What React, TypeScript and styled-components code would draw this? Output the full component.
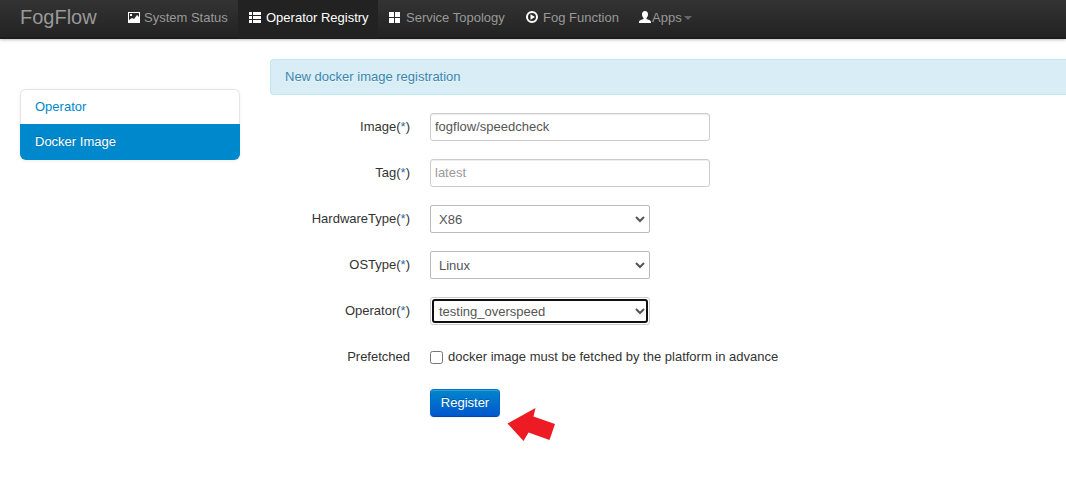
import React from "react";
import styled, { createGlobalStyle } from "styled-components";

const GlobalStyle = createGlobalStyle`
  * { box-sizing: border-box; }
  body {
    margin: 0;
    background: #fff;
    color: #333;
    font: 13px/18px "Liberation Sans", Arial, sans-serif;
    overflow: hidden;
  }
`;

const Text = styled.span`
  white-space: nowrap;
`;

const Navbar = styled.header`
  display: flex;
  height: 39px;
  padding-left: 20px;
  background: linear-gradient(to bottom, #333 0%, #222 100%);
  border-bottom: 1px solid #1d1a1a;
  box-shadow: 0 1px 3px rgba(0, 0, 0, 0.25), inset 0 -1px 0 rgba(0, 0, 0, 0.1);
`;

const Brand = styled.a`
  width: 97px;
  font-size: 20px;
  line-height: 34px;
  color: #999;
`;

const NavLink = styled.a<{ $active?: boolean; $width: number; $gap?: number }>`
  display: flex;
  gap: ${(p) => p.$gap ?? 4}px;
  width: ${(p) => p.$width}px;
  height: 38px;
  padding: 0 10px;
  line-height: 35px;
  color: ${(p) => (p.$active ? "#fff" : "#999")};
  background: ${(p) => (p.$active ? "#222" : "transparent")};
  svg { flex: none; margin-top: 10px; }
`;

const Caret = styled.i`
  width: 0;
  height: 0;
  margin: 16px 0 0 2px;
  border: 4px solid transparent;
  border-top-color: #666;
  border-bottom: 0;
`;

const Page = styled.main`
  display: flex;
  gap: 30px;
  padding: 20px 0 0 20px;
`;

const SideNav = styled.nav`
  width: 220px;
  height: 71px;
  margin-top: 30px;
  border-radius: 6px;
  box-shadow: 0 1px 4px rgba(0, 0, 0, 0.065);
`;

const SideLink = styled.a<{ $active?: boolean }>`
  display: block;
  height: ${(p) => (p.$active ? 36 : 35)}px;
  padding: ${(p) => (p.$active ? "9px 15px" : "8px 14px")};
  border: ${(p) => (p.$active ? "0" : "1px solid #e5e5e5")};
  border-bottom: 0;
  border-radius: ${(p) => (p.$active ? "0 0 6px 6px" : "6px 6px 0 0")};
  color: ${(p) => (p.$active ? "#fff" : "#08c")};
  background: ${(p) => (p.$active ? "#08c" : "#fff")};
  text-shadow: ${(p) => (p.$active ? "0 -1px 0 rgba(0,0,0,.2)" : "none")};
`;

const Content = styled.section`
  flex: 1;
  min-width: 0;
`;

const Notice = styled.div`
  height: 36px;
  margin-bottom: 18px;
  padding: 8px 14px;
  color: #3a87ad;
  background: #d9edf7;
  border: 1px solid #bce8f1;
  border-right: 0;
  border-radius: 4px 0 0 4px;
  text-shadow: 0 1px 0 rgba(255, 255, 255, 0.5);
`;

const Row = styled.div`
  display: flex;
  height: 28px;
  margin-bottom: 18px;
`;

const Label = styled.label`
  width: 140px;
  margin-right: 20px;
  padding-top: 5px;
  text-align: right;
`;

const Star = styled.span`
  color: #2f6cab;
`;

const Input = styled.input`
  width: 280px;
  height: 28px;
  padding: 3px 4px 5px;
  border: 1px solid #ccc;
  border-radius: 3px;
  box-shadow: inset 0 1px 1px rgba(0, 0, 0, 0.075);
  color: #555;
  font: inherit;
  &::placeholder { color: #999; }
`;

const SelectBox = styled.div<{ $focused?: boolean }>`
  position: relative;
  width: 220px;
  height: 28px;
  svg {
    position: absolute;
    right: 5px;
    top: 10px;
    pointer-events: none;
  }
  &::after {
    content: "";
    display: ${(p) => (p.$focused ? "block" : "none")};
    position: absolute;
    inset: 2px;
    border: 2px solid #101010;
    border-radius: 3px;
    pointer-events: none;
  }
`;

const Select = styled.select<{ $focused?: boolean }>`
  appearance: none;
  width: 220px;
  height: 28px;
  padding: 5px 8px 3px;
  border: 1px solid ${(p) => (p.$focused ? "#ccc" : "#bbb")};
  border-radius: ${(p) => (p.$focused ? 3 : 2)}px;
  outline: none;
  color: #555;
  background: #fff;
  font: inherit;
`;

const CheckLabel = styled.label`
  display: flex;
  gap: 5px;
  padding-top: 5px;
`;

const Checkbox = styled.input`
  width: 13px;
  height: 13px;
  margin: 3px 0 0;
`;

const Actions = styled.div`
  display: flex;
  padding-left: 160px;
`;

const Button = styled.button`
  width: 70px;
  height: 28px;
  padding: 0;
  border: 1px solid;
  border-color: #0074cc #0067c4 #0046b0;
  border-radius: 4px;
  color: #fff;
  font: inherit;
  background: linear-gradient(to bottom, #08c, #05c);
  background-origin: border-box;
  box-shadow: inset 0 1px 0 rgba(255, 255, 255, 0.2), 0 1px 2px rgba(0, 0, 0, 0.05);
  text-shadow: 0 -1px 0 rgba(0, 0, 0, 0.25);
`;

const Pointer = styled.svg`
  margin: 18px 0 0 6px;
`;

const ImageIcon = () => (
  <svg width="13" height="14" viewBox="0 0 13 14">
    <path fill="#fff" fillRule="evenodd" d="M1 2h12v11H1zM2 3v7l3-2 2 1 3-4 2 2V3zM3 4h2v2H3z" />
  </svg>
);
const ListIcon = () => (
  <svg width="14" height="14" viewBox="0 0 14 14">
    <path fill="#fff" d="M1 2h3v3H1zM5 2h8v3H5zM1 6h3v3H1zM5 6h8v3H5zM1 10h3v3H1zM5 10h8v3H5z" />
  </svg>
);
const GridIcon = () => (
  <svg width="14" height="14" viewBox="0 0 14 14">
    <path fill="#fff" d="M1 2h5v5H1zM7 2h5v5H7zM1 8h5v5H1zM7 8h5v5H7z" />
  </svg>
);
const PlayIcon = () => (
  <svg width="14" height="14" viewBox="0 0 14 14">
    <circle cx="7" cy="7" r="5" fill="none" stroke="#fff" strokeWidth="2" />
    <path fill="#fff" d="M5.5 4.3L10 7L5.5 9.7z" />
  </svg>
);
const UserIcon = () => (
  <svg width="14" height="14" viewBox="0 0 14 14">
    <path fill="#fff" d="M7 1c2 0 3 1.3 3 3.2C10 6 9.300 7.200 8.500 8v1c1.500.7 4.500 1.200 4.500 3v1H1v-1c0-1.800 3-2.300 4.500-3V8C4.700 7.200 4 6 4 4.200 4 2.300 5 1 7 1z" />
  </svg>
);

const Field = ({ label, children }: { label: string; children: React.ReactNode }) => (
  <Row>
    <Label><Text>{label}(<Star>*</Star>)</Text></Label>
    {children}
  </Row>
);

const Dropdown = ({ value, focused }: { value: string; focused?: boolean }) => (
  <SelectBox $focused={focused}>
    <Select $focused={focused}><option>{value}</option></Select>
    <svg width="10" height="8" viewBox="0 0 10 8">
      <path d="M1 2L5 6L9 2" fill="none" stroke="#555" strokeWidth="2" />
    </svg>
  </SelectBox>
);

export default function App() {
  return (
    <>
      <GlobalStyle />
      <Navbar>
        <Brand><Text>FogFlow</Text></Brand>
        <NavLink $width={121}><ImageIcon /><Text>System Status</Text></NavLink>
        <NavLink $width={140} $active><ListIcon /><Text>Operator Registry</Text></NavLink>
        <NavLink $width={137}><GridIcon /><Text>Service Topology</Text></NavLink>
        <NavLink $width={113}><PlayIcon /><Text>Fog Function</Text></NavLink>
        <NavLink $width={74} $gap={0}><UserIcon /><Text>Apps</Text><Caret /></NavLink>
      </Navbar>
      <Page>
        <SideNav>
          <SideLink><Text>Operator</Text></SideLink>
          <SideLink $active><Text>Docker Image</Text></SideLink>
        </SideNav>
        <Content>
          <Notice><Text>New docker image registration</Text></Notice>
          <Field label="Image"><Input defaultValue="fogflow/speedcheck" /></Field>
          <Field label="Tag"><Input placeholder="latest" /></Field>
          <Field label="HardwareType"><Dropdown value="X86" /></Field>
          <Field label="OSType"><Dropdown value="Linux" /></Field>
          <Field label="Operator"><Dropdown value="testing_overspeed" focused /></Field>
          <Row>
            <Label><Text>Prefetched</Text></Label>
            <CheckLabel>
              <Checkbox type="checkbox" />
              <Text>docker image must be fetched by the platform in advance</Text>
            </CheckLabel>
          </Row>
          <Actions>
            <Button><Text>Register</Text></Button>
            <Pointer width="50" height="36" viewBox="0 0 50 36">
              <path fill="#ed1c24" d="M1.500 16.500L29.500 1L27.500 9.500L49 17L43.500 33L22.500 25.500L17.500 34z" />
            </Pointer>
          </Actions>
        </Content>
      </Page>
    </>
  );
}
